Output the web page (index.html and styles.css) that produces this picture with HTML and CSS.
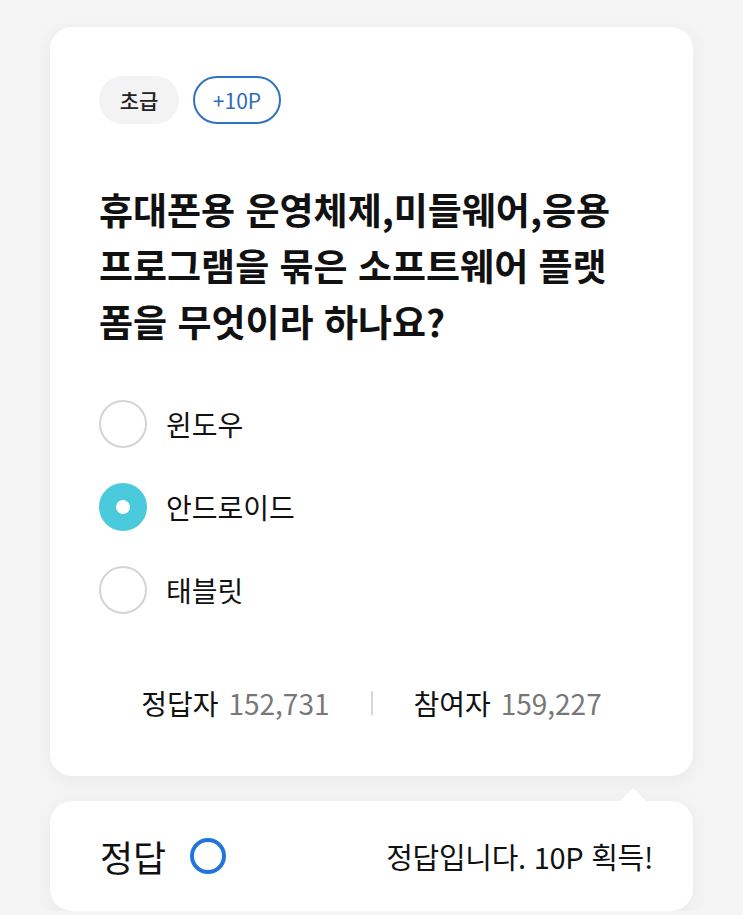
FILE: index.html
```html
<!DOCTYPE html>
<html lang="ko">

<head>
    <meta charset="UTF-8">
    <meta name="viewport" content="width=device-width, initial-scale=1.0">
    <title>오늘의 퀴즈</title>
    <link rel="stylesheet" href="styles.css">
</head>

<body>
    <div class="quiz-card">
        <div class="tags">
            <span class="tag tag-level">초급</span>
            <span class="tag tag-point">+10P</span>
        </div>

        <h1 class="question">휴대폰용 운영체제,미들웨어,응용 프로그램을 묶은 소프트웨어 플랫폼을 무엇이라 하나요?</h1>

        <ul class="options">
            <li class="option"><span class="radio"></span>윈도우</li>
            <li class="option"><span class="radio checked"></span>안드로이드</li>
            <li class="option"><span class="radio"></span>태블릿</li>
        </ul>

        <div class="stats">
            <div class="stat">정답자 <span class="num">152,731</span></div>
            <span class="divider"></span>
            <div class="stat">참여자 <span class="num">159,227</span></div>
        </div>
    </div>

    <div class="result-card">
        <div class="result-left">
            <span class="result-title">정답</span>
            <span class="ring"></span>
        </div>
        <div class="result-msg">정답입니다. 10P 획득!</div>
    </div>
</body>

</html>
```

FILE: styles.css
```css
html {
    font-family: "Noto Sans CJK KR", "Noto Sans", sans-serif;
    margin: 0;
}

body {
    margin: 0;
    padding: 27px 50px 0;
    background: #f5f5f5;
    color: #111;
}

.quiz-card,
.result-card {
    background: #fff;
    border-radius: 22px;
    box-shadow: 0 4px 22px rgba(0, 0, 0, .06);
}

.quiz-card {
    padding: 49px 49px 53px;
}

/* tags */

.tags {
    display: flex;
    gap: 14px;
}

.tag {
    height: 48px;
    box-sizing: border-box;
    border-radius: 24px;
    display: flex;
    align-items: center;
    justify-content: center;
    font-size: 21px;
}

.tag-level {
    width: 80px;
    background: #f3f3f3;
    color: #222;
    font-weight: 500;
}

.tag-point {
    width: 88px;
    border: 2px solid #2f72c2;
    color: #2f6cb8;
}

/* question */

.question {
    margin: 57px 12px 51px 0;
    font-size: 37px;
    font-weight: 700;
    line-height: 56px;
    word-break: break-all;
}

.options {
    list-style: none;
    margin: 0;
    padding: 0;
    display: flex;
    flex-direction: column;
    gap: 35px;
}

.option {
    display: flex;
    align-items: center;
    gap: 19px;
    height: 48px;
    font-size: 28px;
}

.radio {
    width: 48px;
    height: 48px;
    box-sizing: border-box;
    border: 2px solid #d4d4d4;
    border-radius: 50%;
    flex-shrink: 0;
}

.radio.checked {
    border: 17px solid #4ccadd;
    background: #fff;
}

/* stats */

.stats {
    margin-top: 69px;
    display: flex;
    justify-content: center;
    align-items: center;
    gap: 41px;
    font-size: 28px;
    line-height: 40px;
}

.num {
    color: #777;
    margin-left: 2px;
}

.divider {
    width: 2px;
    height: 24px;
    background: #d8d8d8;
}

/* result */

.result-card {
    margin-top: 25px;
    height: 110px;
    padding: 0 40px 0 50px;
    display: flex;
    align-items: center;
    justify-content: space-between;
    position: relative;
}

.result-card::before {
    content: "";
    position: absolute;
    top: -13px;
    right: 47px;
    border-left: 13px solid transparent;
    border-right: 13px solid transparent;
    border-bottom: 13px solid #fff;
}

.result-left {
    display: flex;
    align-items: center;
    gap: 24px;
}

.result-title {
    font-size: 36px;
    font-weight: 400;
}

.ring {
    width: 36px;
    height: 36px;
    box-sizing: border-box;
    border: 4px solid #1f74e0;
    border-radius: 50%;
}

.result-msg {
    font-size: 29px;
    letter-spacing: -.3px;
}
```
